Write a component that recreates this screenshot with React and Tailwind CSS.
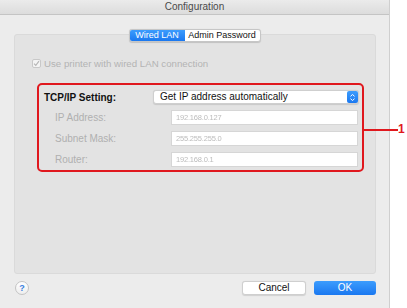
import React from "react";

const font = { fontFamily: '"Liberation Sans", Arial, sans-serif' };

const Field = ({ label, value }) => (
  <div className="flex items-center h-[15px]">
    <div className="w-[127px] pl-[11px] text-[10px] text-[#b0b0b0]">{label}</div>
    <div className="w-[187px] h-[15px] bg-white border border-[#d6d6d6] flex items-center pl-[4px] text-[7.5px] text-[#bcbcbc] tracking-tight blur-[0.4px]">
      {value}
    </div>
  </div>
);

export default function App() {
  return (
    <div className="w-[407px] h-[308px] bg-white flex overflow-hidden" style={font}>
      {/* window */}
      <div className="w-[390px] h-full bg-[#ececec] border-r border-[#cfcfcf] flex flex-col">
        {/* title bar */}
        <div className="h-[15px] bg-gradient-to-b from-[#ebebeb] to-[#dcdcdc] border-b border-[#c4c4c4] flex items-center justify-center">
          <span className="text-[10px] text-[#4a4a4a] leading-none">Configuration</span>
        </div>

        {/* tabs */}
        <div className="relative z-10 flex justify-center mt-[14px] -mb-[8px]">
          <div className="flex h-[13px] rounded-[3px] border border-[#c6c6c6] bg-white text-[9px] leading-none overflow-hidden shadow-[0_0.5px_1px_rgba(0,0,0,0.15)]">
            <div className="w-[55px] bg-gradient-to-b from-[#3c9cfd] to-[#1a78f0] text-white flex items-center justify-center">
              Wired LAN
            </div>
            <div className="w-[75px] text-[#111] flex items-center justify-center">Admin Password</div>
          </div>
        </div>

        {/* group box */}
        <div className="ml-[14px] w-[362px] h-[240px] bg-[#e3e3e3] border border-[#dadada] rounded-[3px] flex flex-col">
          {/* checkbox row */}
          <div className="flex items-center mt-[23px] ml-[17px] h-[11px]">
            <div className="w-[9px] h-[9px] bg-[#f4f4f4] border border-[#c8c8c8] rounded-[2px] flex items-center justify-center">
              <svg width="7" height="7" viewBox="0 0 7 7">
                <path d="M1 3.6 L2.8 5.4 L6 1.2" fill="none" stroke="#b5b5b5" strokeWidth="1.1" />
              </svg>
            </div>
            <span className="ml-[3px] text-[9.7px] text-[#b3b3b3] leading-none">
              Use printer with wired LAN connection
            </span>
          </div>

          {/* highlighted section */}
          <div className="relative ml-[22px] mt-[14px] w-[327px] h-[89px] border-[2px] border-[#e0181e] rounded-[5px] flex flex-col pt-[5px] pl-[5px] gap-[6px]">
            <div className="flex items-center h-[14px]">
              <div className="w-[109px] text-[10px] font-bold text-[#111]">TCP/IP Setting:</div>
              <div className="w-[206px] h-[14px] bg-white rounded-[3px] border border-[#cfcfcf] shadow-[0_0.5px_1px_rgba(0,0,0,0.12)] flex items-center justify-between pl-[6px] text-[10px] text-[#111]">
                <span className="leading-none">Get IP address automatically</span>
                <div className="w-[11px] h-[12px] mr-[0.5px] bg-gradient-to-b from-[#3c9cfd] to-[#1a78f0] rounded-[2px] flex items-center justify-center">
                  <svg width="7" height="9" viewBox="0 0 7 9">
                    <path d="M1.5 3.3 L3.5 1.5 L5.5 3.3 M1.5 5.7 L3.5 7.5 L5.5 5.7" fill="none" stroke="white" strokeWidth="1" />
                  </svg>
                </div>
              </div>
            </div>
            <Field label="IP Address:" value="192.168.0.127" />
            <Field label="Subnet Mask:" value="255.255.255.0" />
            <Field label="Router:" value="192.168.0.1" />

            {/* callout */}
            <div className="absolute left-[325px] top-[44px] w-[34px] h-[2px] bg-[#e0181e]" />
            <div className="absolute left-[359px] top-[38px] text-[12px] font-bold text-[#e0181e] leading-none">1</div>
          </div>
        </div>

        {/* bottom buttons */}
        <div className="flex items-center mt-[7px] h-[14px] pl-[15px] pr-[13px]">
          <div className="w-[14px] h-[14px] rounded-full bg-gradient-to-b from-white to-[#eeeeee] border border-[#c4c4c4] flex items-center justify-center text-[9px] font-bold text-[#3a7fe0] leading-none">
            ?
          </div>
          <div className="flex-1" />
          <div className="w-[64px] h-[14px] bg-white border border-[#cfcfcf] rounded-[3px] flex items-center justify-center text-[10px] text-[#111] leading-none shadow-[0_0.5px_1px_rgba(0,0,0,0.12)]">
            Cancel
          </div>
          <div className="ml-[8px] w-[62px] h-[14px] bg-gradient-to-b from-[#3c9cfd] to-[#1a78f0] rounded-[3px] flex items-center justify-center text-[10px] text-white leading-none">
            OK
          </div>
        </div>
      </div>
    </div>
  );
}
